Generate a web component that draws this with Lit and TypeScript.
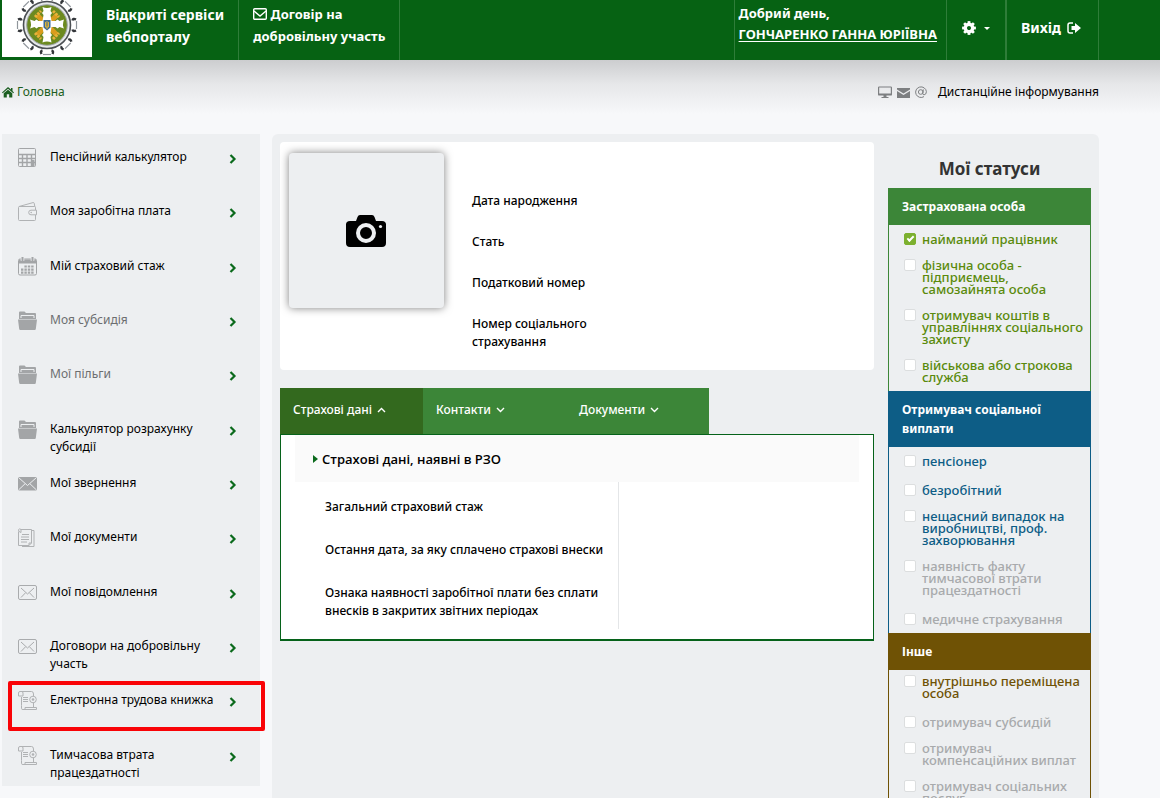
import { LitElement, html, svg, css } from "lit";
import { customElement } from "lit/decorators.js";
import { classMap } from "lit/directives/class-map.js";

type MenuItem = { label: string; icon: string; muted?: boolean; marked?: boolean };
type Status = { label: string; checked?: boolean; muted?: boolean };
type Group = { title: string; tone: string; items: Status[] };

const MENU: MenuItem[] = [
  { label: "Пенсійний калькулятор", icon: "calculator" },
  { label: "Моя заробітна плата", icon: "wallet" },
  { label: "Мій страховий стаж", icon: "calendar" },
  { label: "Моя субсидія", icon: "folder", muted: true },
  { label: "Мої пільги", icon: "folder", muted: true },
  { label: "Калькулятор розрахунку субсидії", icon: "folder" },
  { label: "Мої звернення", icon: "mailSolid" },
  { label: "Мої документи", icon: "documents" },
  { label: "Мої повідомлення", icon: "mail" },
  { label: "Договори на добровільну участь", icon: "mail" },
  { label: "Електронна трудова книжка", icon: "scroll", marked: true },
  { label: "Тимчасова втрата працездатності", icon: "scroll" },
];

const GROUPS: Group[] = [
  {
    title: "Застрахована особа",
    tone: "green",
    items: [
      { label: "найманий працівник", checked: true },
      { label: "фізична особа - підприємець, самозайнята особа" },
      { label: "отримувач коштів в управліннях соціального захисту" },
      { label: "військова або строкова служба" },
    ],
  },
  {
    title: "Отримувач соціальної виплати",
    tone: "blue",
    items: [
      { label: "пенсіонер" },
      { label: "безробітний" },
      { label: "нещасний випадок на виробництві, проф. захворювання" },
      { label: "наявність факту тимчасової втрати працездатності", muted: true },
      { label: "медичне страхування", muted: true },
    ],
  },
  {
    title: "Інше",
    tone: "brown",
    items: [
      { label: "внутрішньо переміщена особа" },
      { label: "отримувач субсидій", muted: true },
      { label: "отримувач компенсаційних виплат", muted: true },
      { label: "отримувач соціальних послуг", muted: true },
    ],
  },
];

const GLYPHS: Record<string, unknown> = {
  calculator: svg`
    <rect x="0.5" y="0.5" width="17" height="18" rx="1" fill="none" stroke="#a3a5a7"/>
    <path d="M1 6.500H17M1 10.500H17M1 14.500H17M4.500 6V18M9 6V18M13.500 6V18" stroke="#a3a5a7" stroke-width="1.400"/>
    <path d="M13.500 12h3v6h-3z" fill="#a3a5a7"/>`,
  wallet: svg`
    <path d="M17.500 8V5.500q0-1-1-1H1.500q-1 0-1 1v12q0 1 1 1h15q1 0 1-1V13M1 4.500L15 .600q1-.200 1.200.600l.600 3.300M18.500 8.200h-5.500a2.300 2.300 0 0 0 0 4.600h5.500z" fill="none" stroke="#b0b2b4"/>
    <circle cx="13.200" cy="10.500" r=".800" fill="#b0b2b4"/>`,
  calendar: svg`
    <rect x="0.5" y="2" width="18" height="16" rx="1.500" fill="none" stroke="#a3a5a7"/>
    <path d="M1 2.500h17v4H1z" fill="#a3a5a7"/>
    <path d="M4.500 0v4M14.500 0v4" stroke="#edeff1" stroke-width="3.500"/>
    <path d="M4.500 0v4M14.500 0v4" stroke="#a3a5a7" stroke-width="2"/>
    <path d="M6.400 9.500h10M3 12.700h13M3 15.700h13" stroke="#a3a5a7" stroke-width="2.200" stroke-dasharray="2.400 1"/>`,
  folder: svg`
    <path d="M1 8V1.500Q1 .500 2 .500H6.500L8 2H17q1 0 1 1V8z" fill="#a3a5a7"/>
    <path d="M3 7V4.500H16V7" fill="none" stroke="#edeff1"/>
    <path d="M0 8.500H19L17.800 18q-.100 1-1.100 1H2.300q-1 0-1.100-1z" fill="#a3a5a7"/>`,
  mailSolid: svg`
    <rect x="0" y="3" width="19" height="13.500" rx="1.200" fill="#a3a5a7"/>
    <path d="M.500 3.500L9.500 11.500L18.500 3.500M.500 16L7 9.800M18.500 16L12 9.800" fill="none" stroke="#edeff1"/>`,
  mail: svg`
    <rect x="0.5" y="2.500" width="18" height="14" rx="1.500" fill="none" stroke="#a9abad"/>
    <path d="M3 5L9.500 11L16 5M3 14.500L7.500 9.800M16 14.500L11.500 9.800" fill="none" stroke="#a9abad"/>`,
  documents: svg`
    <path d="M3 1.500H13.500V15L11 17.500H.500V3.500M3 1.500q-2-1.500-2.500.300T3 4.500V1.500M13.500 2.500h2.500v16H4M11 17.500V15h2.500" fill="none" stroke="#b0b2b4"/>
    <path d="M4 6.500h7M3 9h8M3 11.500h8M3 14h6" stroke="#b0b2b4"/>`,
  scroll: svg`
    <path d="M3.500 6V14.500M.500 5V2Q.500.500 2 .500H13.500Q15.500.500 15.500 3V5M.500 5H5V2q0-1.500-1.500-1.500M3.500 14.500V17.500Q3.500 18.500 5 18.500H18.500V16.500H7v2M15.500 12V16" fill="none" stroke="#b0b2b4"/>
    <path d="M5 6.500h5M5 8.500h5M5 10.500h5" stroke="#b0b2b4" stroke-width="1.200"/>
    <circle cx="15" cy="8.500" r="3.300" fill="none" stroke="#b0b2b4"/>
    <circle cx="15" cy="8.500" r="1.300" fill="#b0b2b4"/>`,
};

const teeth = Array.from({ length: 8 }, (_, i) => i * 45);

@customElement("portal-header")
export class PortalHeader extends LitElement {
  static styles = css`
    :host { display: block; background: #066213; color: #fff; font-family: "Noto Sans", "Open Sans", sans-serif; }
    .bar { display: flex; height: 60px; padding-left: 2px; padding-right: 61px; }
    a { color: inherit; text-decoration: none; }
    .logo { width: 90px; height: 57px; background: #fff; flex: none; }
    .logo svg { display: block; margin: 0 auto; }
    .cell { border-right: 1px solid #2f7d39; box-sizing: border-box; }
    .link { padding: 3px 14px 0; font-size: 13px; line-height: 22px; font-weight: 700; white-space: nowrap; }
    .link.strong { padding-top: 4px; font-size: 14px; }
    .link svg { vertical-align: -1px; }
    .user { margin-left: auto; border-left: 1px solid #2f7d39; padding: 3px 9px 0 4px; font-size: 13px; line-height: 21px; font-weight: 700; white-space: nowrap; }
    .user a { text-decoration: underline; text-underline-offset: 2px; }
    .gear { width: 60px; border: 0; border-right: 2px solid #2f7d39; background: none; color: #fff; padding: 0 0 4px; display: flex; align-items: center; justify-content: center; gap: 8px; }
    .exit { display: flex; align-items: center; gap: 6px; padding: 0 17px 4px 14px; font-size: 14px; font-weight: 700; }
  `;
  render() {
    return html`<header class="bar">
      <a class="logo" href="#" aria-label="Пенсійний фонд">
        <svg width="88" height="57" viewBox="0 0 88 57">
          ${teeth.map((a) => svg`<g transform="rotate(${a} 44 25)">
            <path d="M38.500 -4q-1.500 3 1 3.500M49.500 -4q1.500 3-1 3.500" fill="none" stroke="#33363a" stroke-width="2.400"/>
            <path d="M40 -4.500h8" fill="none" stroke="#8f959b" stroke-width="1.200"/></g>`)}
          <circle cx="44" cy="25" r="23.500" fill="#e6e8ea" stroke="#4c5054" stroke-width="1.600"/>
          <circle cx="44" cy="25" r="20.300" fill="#6c8a20" stroke="#9fa5a9" stroke-width="1"/>
          <path d="M34 15L54 35M54 15L34 35" stroke="#d99c1e" stroke-width="5"/>
          <path d="M32 17l6-6M50 11l6 6M32 33l6 6M50 39l6-6" stroke="#e9b23a" stroke-width="3" stroke-dasharray="2.500 1"/>
          <path d="M39.500 7q4.500 2 9 0l-1 4 1.500 2-1.500 2 1 6h4l2-1.500 2 1.500 4.500-1.500q-2 5.500 0 9L56.500 27l-2 1.500-2-1.500h-4l-1 6 1.500 2-1.500 2 1 5.500q-4.500-2-9 0l1-5.500-1.500-2 1.500-2-1-6h-4l-2 1.500-2-1.500-4.500 1.500q2-3.500 0-9l4.500 1.500 2-1.500 2 1.500h4l1-6-1.500-2 1.500-2z" fill="#fff"/>
          <path d="M40.500 20h7v7.500l-3.500 3-3.500-3z" fill="#3d6a94"/>
          <path d="M42.500 22v5h3v-5M44 21v8" stroke="#dcb33a" fill="none"/>
        </svg>
      </a>
      <a class="cell link strong" href="#">Відкриті сервіси<br />вебпорталу</a>
      <a class="cell link" href="#"><svg width="14" height="12" viewBox="0 0 14 12" fill="none" stroke="#fff" stroke-width="1.400"><rect x=".7" y=".7" width="12.600" height="10.600" rx="1"/><path d="M1 3L7 8L13 3"/></svg>
        Договір на<br />добровільну участь</a>
      <div class="cell user">Добрий день,<br /><a href="#">ГОНЧАРЕНКО ГАННА ЮРІЇВНА</a></div>
      <button class="gear" aria-label="Налаштування">
        <svg width="14" height="14" viewBox="-7 -7 14 14"><circle r="3.700" fill="none" stroke="#fff" stroke-width="3.400"/>${teeth.map((a) => svg`<rect x="-1.400" y="-6.900" width="2.800" height="3" fill="#fff" transform="rotate(${a})"/>`)}</svg>
        <svg width="6" height="3" viewBox="0 0 6 3"><path d="M0 0h6L3 3z" fill="#fff"/></svg>
      </button>
      <a class="cell exit" href="#">Вихід
        <svg width="14" height="12" viewBox="0 0 14 12"><path d="M6 1H3Q1 1 1 3V9Q1 11 3 11H6" fill="none" stroke="#fff" stroke-width="1.500"/><path d="M4.500 4H8V1L14 6L8 11V8H4.500z" fill="#fff"/></svg>
      </a>
    </header>`;
  }
}

@customElement("side-menu")
export class SideMenu extends LitElement {
  static styles = css`
    :host { display: block; font-family: "Noto Sans", "Open Sans", sans-serif; }
    .menu { display: grid; grid-auto-rows: 1fr; min-height: 652px; background: #edeff1; margin: 0; padding: 0; list-style: none; }
    .item { position: relative; }
    .link { display: flex; gap: 4px; align-items: flex-start; padding: 14px 23px 0 16px; font-size: 12px; line-height: 18px; color: #000; text-decoration: none; }
    .text { flex: 1; padding: 0 12px 0 8px; margin-right: -8px; }
    .icon, .chevron { flex: none; }
    .muted { color: #6c6e70; }
    .chevron { margin-top: 6px; }
    .frame { position: absolute; inset: 4px -5px 1px 6px; border: 4px solid #f90307; border-radius: 2px; pointer-events: none; }
  `;
  render() {
    return html`<nav><ul class="menu">${MENU.map((m) => html`<li class="item">
      <a href="#" class=${classMap({ link: true, muted: !!m.muted })}>
        <svg class="icon" width="20" height="20" viewBox="0 0 20 20">${GLYPHS[m.icon]}</svg>
        <span class="text">${m.label}</span>
        <svg class="chevron" width="8" height="10" viewBox="0 0 8 10"><path d="M1.500 1L5.500 5L1.500 9" fill="none" stroke="#0b6a1c" stroke-width="2.200"/></svg>
      </a>${m.marked ? html`<div class="frame"></div>` : ""}
    </li>`)}</ul></nav>`;
  }
}

@customElement("status-groups")
export class StatusGroups extends LitElement {
  static styles = css`
    :host { display: block; font-family: "Noto Sans", "Open Sans", sans-serif; }
    .title { margin: 0; padding: 16px 0 8px; font-size: 17px; line-height: 22px; color: #333; text-align: center; }
    .head { margin: 0; padding: 9px 14px; background: var(--tone); color: #fff; font-size: 12px; line-height: 19px; font-weight: 700; }
    .list { display: flex; flex-direction: column; gap: 14px; margin: 0; padding: 5px 6px 8px 15px; border: solid var(--tone); border-width: 0 1px; list-style: none; }
    .entry { display: flex; align-items: flex-end; min-height: 15px; }
    .label { display: flex; gap: 6px; color: var(--ink); font-size: 13px; line-height: 12px; font-weight: 500; }
    .muted { color: #a8aaac; }
    .green { --tone: #3c8638; --ink: #5a8a0c; }
    .blue { --tone: #0d5d86; --ink: #0d5d86; }
    .brown { --tone: #6f5205; --ink: #6f5205; }
    .box { appearance: none; flex: none; width: 12px; height: 12px; margin: 0; box-sizing: border-box; border: 1px solid #dcdedf; border-radius: 2px; background: #fff; }
    .box:checked { background: #7cb02f; border-color: #7cb02f; }
    .box:checked::before { content: ""; display: block; box-sizing: border-box; width: 7px; height: 4px; margin: 2px 0 0 2px; border: solid #fff; border-width: 0 0 2px 2px; transform: rotate(-45deg); }
  `;
  render() {
    return html`<aside><h2 class="title">Мої статуси</h2>${GROUPS.map((g) => html`<section class=${g.tone}>
      <h3 class="head">${g.title}</h3>
      <ul class="list">${g.items.map((s) => html`<li class="entry">
        <label class=${classMap({ label: true, muted: !!s.muted })}><input class="box" type="checkbox" .checked=${!!s.checked} /><span>${s.label}</span></label>
      </li>`)}</ul></section>`)}</aside>`;
  }
}

@customElement("app-root")
export class AppRoot extends LitElement {
  static styles = css`
    :host { display: block; height: 100vh; overflow: hidden; background: #f7f8fa; color: #000; font-family: "Noto Sans", "Open Sans", sans-serif; font-size: 12px; line-height: 18px; }
    .crumbs { display: flex; align-items: center; justify-content: space-between; height: 74px; padding: 0 61px 10px 2px; box-sizing: border-box; background: linear-gradient(#cccdcf, #e6e7e9 24px, #f7f8fa 54px); }
    .home { display: flex; align-items: center; gap: 3px; color: #1b5e20; text-decoration: none; }
    .remote { display: flex; align-items: center; gap: 5px; color: #000; text-decoration: none; }
    .remote span { margin-left: 6px; }
    .columns { display: grid; grid-template-columns: 258px minmax(0, 1fr); column-gap: 12px; align-items: start; padding: 0 61px 0 2px; }
    .panel { display: grid; grid-template-columns: minmax(0, 1fr) 203px; column-gap: 14px; padding: 8px; background: #edeff1; border-radius: 6px; }
    .card { display: flex; gap: 28px; min-height: 228px; padding: 11px 9px; box-sizing: border-box; background: #fff; border-radius: 4px; }
    .photo { flex: none; width: 155px; height: 155px; padding: 0 2px 0 0; border: 0; border-radius: 4px; background: #edeff1; box-shadow: 0 0 8px rgba(0, 0, 0, 0.5); display: grid; place-items: center; }
    .facts { display: flex; flex-direction: column; gap: 23px; margin: 0; padding-top: 39px; width: 150px; font-weight: 500; }
    .tabs { display: flex; margin-top: 18px; }
    .tab { width: 143px; height: 46px; padding: 0 13px 3px; border: 0; display: flex; align-items: center; gap: 5px; background: #3c8638; color: #fff; font: 500 12px "Noto Sans", "Open Sans", sans-serif; }
    .tab.active { background: #33691e; }
    .sheet { padding: 0 14px 10px; border: 1px solid #06621a; border-bottom-width: 2px; background: #fff; }
    .toggle { width: 100%; height: 47px; padding: 0 18px; border: 0; display: flex; align-items: center; gap: 4px; background: #fafafa; font: 600 13px "Open Sans", "Noto Sans", sans-serif; color: #000; }
    .data { width: 100%; border-spacing: 0; table-layout: fixed; }
    .data th { width: 57.5%; box-sizing: border-box; padding: 16px 12px 9px 30px; border-right: 1px solid #e4e6e8; text-align: left; vertical-align: top; font-weight: 500; }
    .data td { padding: 0; }
  `;
  render() {
    const arrow = (up: boolean) => html`<svg width="9" height="6" viewBox="0 0 9 6"><path d=${up ? "M1 5L4.500 1.500L8 5" : "M1 1L4.500 4.500L8 1"} fill="none" stroke="#fff" stroke-width="1.400"/></svg>`;
    return html`
      <portal-header></portal-header>
      <div class="crumbs">
        <a class="home" href="#"><svg width="12" height="11" viewBox="0 0 12 11" fill="#1b5e20"><path d="M6 0L9 2.600V1h1.500v3L12 5.400l-.700.800L6 1.700.700 6.200 0 5.400z"/><path d="M6 2.700l4.300 3.600V10.500H7.200V7.300H4.800v3.200H1.700V6.300z"/></svg>Головна</a>
        <a class="remote" href="#">
          <svg width="14" height="13" viewBox="0 0 14 13"><rect x=".6" y="1" width="12.800" height="8" rx=".6" fill="none" stroke="#7d7f81" stroke-width="1.200"/><path d="M1 7.500h12v1.500H1zM5.500 9h3v2h2v1h-7v-1h2z" fill="#7d7f81"/></svg>
          <svg width="13" height="11" viewBox="0 0 13 11"><path d="M0 1h13v1.500L6.500 6.500 0 2.500zM0 4L6.500 8 13 4v7H0z" fill="#7d7f81"/></svg>
          <svg width="12" height="12" viewBox="0 0 12 12" fill="none" stroke="#7d7f81"><circle cx="5.700" cy="6" r="2.300"/><path d="M8.300 3.400L7.800 7.500q0 1.300 1.300 1.300 2.300-.300 2.300-3.100A5.400 5.300 0 1 0 9 10.600"/></svg>
          <span>Дистанційне інформування</span>
        </a>
      </div>
      <div class="columns">
        <side-menu></side-menu>
        <main class="panel">
          <div>
            <section class="card">
              <button class="photo" aria-label="Фото">
                <svg width="40" height="32" viewBox="0 0 40 32"><path d="M4 6H10L11.500 2Q12.200 0 14 0H26Q27.800 0 28.500 2L30 6H36Q40 6 40 9.500V28Q40 32 36 32H4Q0 32 0 28V9.500Q0 6 4 6z"/><circle cx="20" cy="18" r="8" fill="none" stroke="#edeff1" stroke-width="4"/><circle cx="34.500" cy="11.500" r="1.600" fill="#edeff1"/></svg>
              </button>
              <div class="facts">
                <span>Дата народження</span><span>Стать</span><span>Податковий номер</span><span>Номер соціального страхування</span>
              </div>
            </section>
            <div class="tabs" role="tablist">
              <button class="tab active" role="tab" aria-selected="true">Страхові дані ${arrow(true)}</button>
              <button class="tab" role="tab">Контакти ${arrow(false)}</button>
              <button class="tab" role="tab">Документи ${arrow(false)}</button>
            </div>
            <section class="sheet">
              <button class="toggle"><svg width="5" height="8" viewBox="0 0 5 8"><path d="M0 0L5 4L0 8z" fill="#0b6a1c"/></svg>Страхові дані, наявні в РЗО</button>
              <table class="data">
                <tr><th scope="row">Загальний страховий стаж</th><td></td></tr>
                <tr><th scope="row">Остання дата, за яку сплачено страхові внески</th><td></td></tr>
                <tr><th scope="row">Ознака наявності заробітної плати без сплати внесків в закритих звітних періодах</th><td></td></tr>
              </table>
            </section>
          </div>
          <status-groups></status-groups>
        </main>
      </div>`;
  }
}
